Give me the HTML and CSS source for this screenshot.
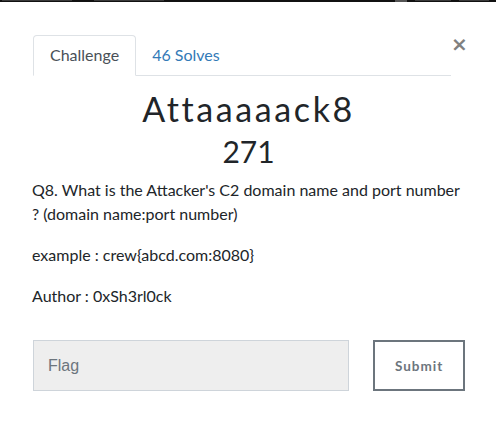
FILE: index.html
```html
<!DOCTYPE html>
<html>
<head>
<meta charset="utf-8">
<link rel="stylesheet" href="styles.css">
</head>
<body>
<div class="backdrop-strip">
  <i class="frag f1"></i><i class="frag f2"></i><i class="frag f3"></i><i class="frag f4"></i><i class="frag f5"></i>
</div>
<div class="modal">
  <div class="header">
    <nav class="tabs">
      <a class="tab active">Challenge</a>
      <a class="tab">46 Solves</a>
    </nav>
    <button class="close" aria-label="Close">×</button>
  </div>
  <h2 class="title">Attaaaaack8</h2>
  <h3 class="value">271</h3>
  <div class="desc">
    <p>Q8. What is the Attacker's C2 domain name and port number ? (domain name:port number)</p>
    <p>example : crew{abcd.com:8080}</p>
    <p>Author : 0xSh3rl0ck</p>
  </div>
  <form class="submit-row">
    <input class="flag" type="text" placeholder="Flag">
    <button class="submit" type="button">Submit</button>
  </form>
</div>
</body>
</html>
```
FILE: styles.css
```css
* { box-sizing: border-box; }
html, body { margin: 0; padding: 0; background: #fff; }
body { width: 496px; height: 440px; overflow: hidden; font-family: Lato, "Noto Sans", sans-serif; color: #212529; }

.backdrop-strip {
  height: 2px;
  background: #111;
  display: flex;
  align-items: flex-start;
}
.frag { display: block; height: 1px; background: #3a3a3a; }
.f1 { width: 70px; margin-left: 2px; }
.f2 { width: 70px; margin-left: 22px; }
.f3 { width: 12px; margin-left: 231px; background: #555; height: 2px; }
.f4 { width: 36px; margin-left: 8px; }
.f5 { width: 30px; margin-left: 8px; }

.modal { padding: 33px 31px 0 32px; }

.header { display: flex; align-items: flex-start; }
.tabs {
  display: flex;
  width: 420px;
  margin-left: 1px;
  border-bottom: 1px solid #dee2e6;
}
.tab {
  display: block;
  height: 41px;
  padding: 0 16px;
  font-size: 16px;
  line-height: 38px;
  color: #337ab7;
  border: 1px solid transparent;
  border-radius: 4px 4px 0 0;
  margin-bottom: -1px;
  margin-right: -1px;
}
.tab.active {
  color: #495057;
  border-color: #dee2e6 #dee2e6 #fff;
  background: #fff;
}
.close {
  margin-left: auto;
  margin-right: 2px;
  margin-top: -1px;
  background: none;
  border: 0;
  padding: 0;
  font-family: "DejaVu Sans", sans-serif;
  font-size: 20px;
  font-weight: bold;
  line-height: 20px;
  color: #808080;
  width: 12px;
}

.title {
  margin: 13px 0 0;
  text-align: center;
  font-family: Lato, sans-serif;
  font-weight: 400;
  font-size: 34px;
  letter-spacing: 2.6px;
  line-height: 40px;
  color: #212529;
}
.value {
  margin: 4px 0 0;
  text-align: center;
  font-weight: 400;
  font-size: 30px;
  line-height: 36px;
  color: #212529;
}
.desc { margin-top: 9px; }
.desc p {
  margin: 0 0 17px;
  font-size: 16px;
  line-height: 24px;
  color: #212529;
}

.submit-row { display: flex; margin-top: 32px; align-items: flex-start; }
.flag {
  width: 317px;
  height: 51px;
  margin-left: 1px;
  background: #eee;
  border: 1px solid #ced4da;
  border-radius: 0;
  padding: 0 14px;
  font-family: "Liberation Sans", Arial, sans-serif;
  font-size: 16px;
  color: #495057;
  outline: none;
}
.flag::placeholder { color: #6c757d; }
.submit {
  margin-left: 24px;
  width: 92px;
  height: 51px;
  background: #fff;
  border: 2px solid #6c757d;
  border-radius: 0;
  font-family: Lato, sans-serif;
  font-weight: 700;
  font-size: 13.5px;
  letter-spacing: 1px;
  color: #6c757d;
  padding: 0;
}
```
